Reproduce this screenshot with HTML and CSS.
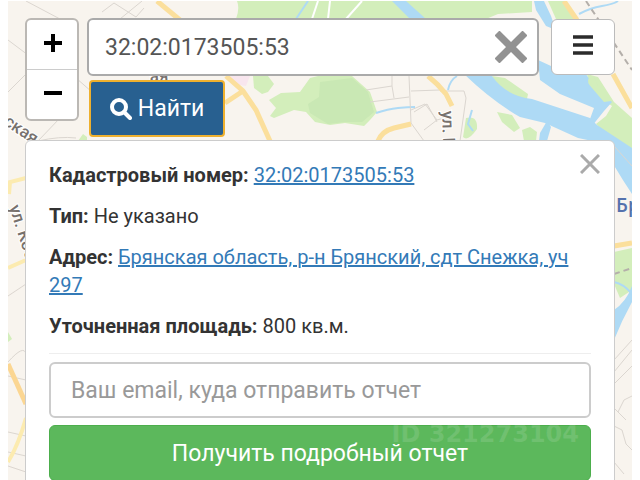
FILE: index.html
```html
<!DOCTYPE html>
<html lang="ru">
<head>
    <meta charset="UTF-8">
    <meta name="viewport" content="width=device-width, initial-scale=1.0">
    <title>Кадастровая карта</title>
    <link rel="stylesheet" href="styles.css">
</head>
<body>

    <div class="map">
        <svg class="map-tiles" viewBox="8 1 624 479" preserveAspectRatio="xMidYMid slice" aria-hidden="true">
            <rect x="8" y="1" width="624" height="479" fill="#f8f4ee"/>

            <!-- parks -->
            <g fill="#d3eebb">
                <path d="M237 1H400L440 19H236Q240 8 237 1Z"/>
                <path d="M398 1H532V12L498 14L486 19H398Z"/>
                <path d="M548 1H566L578 19H556Z"/>
                <path d="M253 76H268L274 84L268 92L262 94L254 88Z"/>
                <path d="M281 93L300 92L310 78L318 76H352L370 92L377 112L370 120L364 126L345 123L330 125L315 122L306 112L294 110L274 118L270 116L276 108L269 100Z"/>
                <path d="M492 76L505 78L528 94L527 99L516 97L498 87Z"/>
                <path d="M497 112L512 115L520 128L514 132L502 122Z"/>
                <path d="M522 130L530 127L537 132L536 141H524Z"/>
                <path d="M466 118Q478 115 477 129Q468 142 463 137Z"/>
                <path d="M587 74L598 77L614 102L632 118V150L612 140L596 124L606 116L612 106L590 90Z"/>
                <path d="M614 252L632 248V290L620 298L614 284Z"/>
                <path d="M8 332L12 339L8 342Z"/>
                <path d="M78 141L83 134L87 137V141Z"/>
            </g>
            <path d="M320 82L352 78L368 92L374 112L362 122L345 122L328 124L310 113L308 104L319 97Z" fill="#c9e8b4"/>
            <g fill="#f8e6ee">
                <path d="M228 76H250L246 86L234 84Z"/>
            </g>

            <!-- river -->
            <g fill="#aedaf5">
                <path d="M392 1H406L426 19H410Z"/>
                <path d="M534 1H544L551 16L556 30L546 26L536 10Z"/>
                <path d="M464 74L492 76Q506 96 532 99L590 118L597 125L632 148V194Q612 164 602 143L578 138L545 123L520 117Q492 101 464 74Z"/>
                <path d="M538 60L551 66L586 74L596 90L612 102L604 111L592 126L590 119L594 108L560 94L540 80Z"/>
                <path d="M547 121L551 127L547 141H539L540 133Z"/>
                <path d="M632 286V302Q622 320 614 340V310Q626 302 632 286Z"/>
            </g>
            <g fill="none" stroke="#aedaf5" stroke-width="2">
                <path d="M308 1L296 19"/>
                <path d="M376 113Q388 109 398 108T415 107"/>
                <path d="M448 90Q450 80 457 76"/>
                <path d="M579 14Q590 8 602 6T618 1"/>
                <path d="M614 282Q624 284 632 294"/>
                <path d="M472 110L468 124L473 131"/>
            </g>
            <path d="M589 78Q586 82 592 88L604 102L611 101Q606 90 598 86L594 77Z" fill="#d3eebb"/>

            <!-- small streets -->
            <g fill="none" stroke="#dbd6d0" stroke-width="1">
                <path d="M8 40L40 64M8 92L28 72M102 12L114 3L136 17L144 8M120 19L142 1M60 19L26 1M76 78L92 92M38 141L60 118"/>
                <path d="M366 90L392 86L394 98M370 102L409 97M409 76L411 123L424 141M392 86V76M411 91L440 90M411 110L425 104L437 120L424 130M437 120L444 118"/>
                <path d="M440 91H464L466 98L460 141M414 112L427 104L437 122"/>
                <path d="M8 296L26 284M8 362Q24 344 26 354M8 376L26 380M8 432L26 436M8 452L26 456M8 466L26 472M38 141Q60 136 76 138"/>
                <path d="M614 360L632 340M614 372L632 350M614 384L632 366M618 412L624 400L632 396M614 426L622 430L626 444L632 450M614 408L626 420M614 462L624 474M614 146L632 166"/>
            </g>
            <path d="M586 1L632 70M614 274L632 268" fill="none" stroke="#b4afaa" stroke-width="2" stroke-dasharray="6 4"/>

            <!-- roads -->
            <g fill="none" stroke="#fbdf9c" stroke-width="5">
                <path d="M157 1L180 20"/>
                <path d="M226 76L243 91L256 110L270 141M243 91L225 103"/>
                <path d="M378 141Q382 131 394 128L411 124"/>
                <path d="M428 76Q438 84 446 94L452 106"/>
                <path d="M564 1L577 20M613 74L632 108"/>
                <path d="M614 246L632 243"/>
            </g>
            <g fill="none" stroke="#fcebb0" stroke-width="4">
                <path d="M26 178L10 182L9 194M8 268L26 260M8 462Q18 446 26 418"/>
            </g>
            <path d="M8 364L26 404" fill="none" stroke="#fbd692" stroke-width="5"/>
            <g fill="none" stroke="#ffffff" stroke-width="2">
                <path d="M318 1L312 19M330 1L328 19M362 1L346 19"/>
            </g>

            <!-- labels -->
            <g class="map-label">
                <text transform="translate(3 124) rotate(34)">ская</text>
                <text transform="translate(9 207) rotate(72)">ул. Кос</text>
                <text transform="translate(442 111) rotate(88)">ул. К</text>
                <text transform="translate(150 82) rotate(-4)">ая</text>
            </g>
            <text class="map-city" x="616" y="212">Брянск</text>
        </svg>

        <div class="overlay">
            <div class="toolbar">
                <div class="zoom">
                    <button type="button" class="zoom-btn" aria-label="Приблизить">
                        <svg width="18" height="18" viewBox="0 0 18 18"><path d="M0 9H18M9 0V18" stroke="#000" stroke-width="4"/></svg>
                    </button>
                    <button type="button" class="zoom-btn" aria-label="Отдалить">
                        <svg width="18" height="18" viewBox="0 0 18 18"><path d="M0 9H18" stroke="#000" stroke-width="4"/></svg>
                    </button>
                </div>

                <form class="search">
                    <div class="search-box">
                        <input type="text" class="search-input" aria-label="Кадастровый номер" value="32:02:0173505:53">
                        <button type="button" class="clear-btn" aria-label="Очистить">
                            <svg width="32" height="32" viewBox="0 0 32 32"><path d="M2 2L30 30M30 2L2 30" stroke="#929292" stroke-width="7"/></svg>
                        </button>
                    </div>
                    <button type="button" class="find-btn">
                        <svg width="22" height="22" viewBox="0 0 22 22" fill="none" stroke="#fff"><circle cx="9" cy="9" r="7" stroke-width="4"/><path d="M14 14L20 20" stroke-width="4" stroke-linecap="round"/></svg>
                        Найти
                    </button>
                </form>

                <button type="button" class="menu-btn" aria-label="Меню">
                    <svg width="20" height="20" viewBox="0 0 20 20"><path d="M0 2H20M0 10H20M0 18H20" stroke="#2b2b2b" stroke-width="3.5"/></svg>
                </button>
            </div>

            <div class="panel">
                <button type="button" class="close-btn" aria-label="Закрыть">
                    <svg width="20" height="20" viewBox="0 0 20 20"><path d="M1 1L19 19M19 1L1 19" stroke="#aaa" stroke-width="3"/></svg>
                </button>
                <p><b>Кадастровый номер:</b> <a href="#">32:02:0173505:53</a></p>
                <p><b>Тип:</b> Не указано</p>
                <p><b>Адрес:</b> <a href="#">Брянская область, р-н Брянский, сдт Снежка, уч 297</a></p>
                <p><b>Уточненная площадь:</b> 800 кв.м.</p>

                <form class="report">
                    <input type="email" class="email-input" aria-label="Email" placeholder="Ваш email, куда отправить отчет">
                    <button type="button" class="report-btn">Получить подробный отчет</button>
                    <span class="watermark">ID 321273104</span>
                </form>
            </div>
        </div>
    </div>

</body>
</html>
```
FILE: styles.css
```css
* {
    margin: 0;
    padding: 0;
    box-sizing: border-box;
}

body {
    font-family: Roboto, 'Liberation Sans', sans-serif;
    font-size: 20px;
    line-height: 28px;
    color: #333;
    background-color: #fff;
    padding: 1px 8px 0;
}

button,
input {
    font-family: inherit;
    font-size: 23px;
}

button {
    display: flex;
    align-items: center;
    justify-content: center;
    border: none;
    cursor: pointer;
}

/* map background */
.map {
    position: relative;
    height: calc(100vh - 1px);
    overflow: hidden;
}

.map-tiles {
    position: absolute;
    top: 0;
    left: 0;
    width: 100%;
    height: 100%;
}

.map-label {
    font-size: 17px;
    font-weight: 500;
    fill: #77716d;
    stroke: #fff;
    stroke-width: 2px;
    paint-order: stroke;
}

.map-city {
    font-family: 'Open Sans', sans-serif;
    font-size: 19px;
    font-weight: 600;
    fill: #5572ad;
}

.overlay {
    position: relative;
    padding: 17px 17px 0;
}

/* toolbar */
.toolbar {
    display: flex;
    align-items: flex-start;
    margin-bottom: 3px;
}

.zoom {
    width: 54px;
    margin-right: 8px;
    border: 2px solid #bbb8b4;
    border-radius: 6px;
    background-color: #fff;
}

.zoom-btn {
    width: 100%;
    height: 49px;
    padding: 0 0 3px 2px;
    background: none;
}

.zoom-btn + .zoom-btn {
    height: 50px;
    border-top: 1px solid #ccc;
}

.search {
    flex: 1;
}

.search-box {
    position: relative;
}

.search-input {
    display: block;
    width: 100%;
    height: 58px;
    padding: 0 60px 0 16px;
    border: 2px solid #aaa;
    border-radius: 6px;
    background-color: #fff;
    color: #555;
}

.clear-btn {
    position: absolute;
    top: 13px;
    right: 12px;
    background: none;
}

.find-btn {
    gap: 6px;
    width: 136px;
    height: 57px;
    margin: 4px 2px 0;
    border: 2px solid #eeb02e;
    border-radius: 4px;
    background-color: #286090;
    color: #fff;
}

.menu-btn {
    width: 64px;
    height: 56px;
    padding-bottom: 4px;
    margin: 1px 0 0 12px;
    border: 1px solid #bbb;
    border-radius: 6px;
    background-color: #fff;
}

/* object info */
.panel {
    position: relative;
    padding: 20px 23px;
    border: 1px solid #ccc;
    border-radius: 6px;
    background-color: #fff;
}

.panel p {
    margin-bottom: 13px;
}

.panel a {
    color: #337ab7;
}

.close-btn {
    position: absolute;
    top: 13px;
    right: 14px;
    background: none;
}

.report {
    position: relative;
    padding-top: 8px;
    border-top: 1px solid #eee;
}

.email-input {
    display: block;
    width: 100%;
    height: 56px;
    padding: 0 20px;
    border: 2px solid #ccc;
    border-radius: 6px;
}

.email-input::placeholder {
    color: #999;
}

.report-btn {
    width: 100%;
    height: 56px;
    margin-top: 7px;
    border: 1px solid #4cae4c;
    border-radius: 6px;
    background-color: #5cb85c;
    color: #fff;
}

.watermark {
    position: absolute;
    right: 12px;
    bottom: 33px;
    font-family: 'DejaVu Sans', sans-serif;
    font-size: 24px;
    font-weight: bold;
    line-height: 28px;
    color: rgba(255, 255, 255, 0.13);
    pointer-events: none;
}
```
